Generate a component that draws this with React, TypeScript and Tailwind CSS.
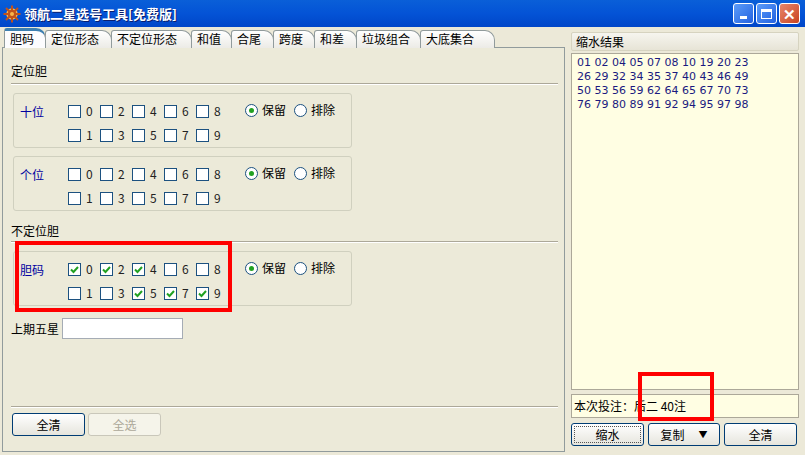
import React from "react";

const F = { fontFamily: '"Noto Sans CJK SC","Liberation Sans",sans-serif' };

function CB({ n, c }: { n: number; c?: boolean }) {
  return (
    <div className="flex items-center gap-[5px] w-[32px]">
      <div className="w-[13px] h-[13px] border border-[#1c5180] bg-white flex items-center justify-center">
        {c && (
          <svg width="9" height="9" viewBox="0 0 9 9"><path d="M1 4.5 L3.5 7 L8 2" stroke="#21a121" strokeWidth="2" fill="none" /></svg>
        )}
      </div>
      <span className="text-[12px] text-[#222]">{n}</span>
    </div>
  );
}

function Radio({ label, on }: { label: string; on?: boolean }) {
  return (
    <div className="flex items-center gap-[4px]">
      <div className="w-[13px] h-[13px] rounded-full border border-[#1c5180] bg-white flex items-center justify-center">
        {on && <div className="w-[5px] h-[5px] rounded-full bg-[#21a121]" />}
      </div>
      <span className="text-[12px]">{label}</span>
    </div>
  );
}

function Group({ name, checked = [] as number[] }: { name: string; checked?: number[] }) {
  return (
    <div className="ml-[10px] w-[339px] h-[55px] border border-[#d0d0bf] rounded-[3px] flex pt-[8px] pl-[6px]">
      <div className="w-[48px] text-[12px] text-[#0000a0] pt-[1px]">{name}</div>
      <div className="flex flex-col gap-[6px]">
        <div className="flex">{[0, 2, 4, 6, 8].map(n => <CB key={n} n={n} c={checked.includes(n)} />)}</div>
        <div className="flex">{[1, 3, 5, 7, 9].map(n => <CB key={n} n={n} c={checked.includes(n)} />)}</div>
      </div>
      <div className="flex gap-[8px] ml-[17px] h-[16px]">
        <Radio label="保留" on />
        <Radio label="排除" />
      </div>
    </div>
  );
}

function Btn({ t, dis, focus, w = "w-[73px]", children }: any) {
  return (
    <div className={`${w} h-[23px] rounded-[3px] border ${dis ? "border-[#c9c7ba] text-[#aca899] bg-[#f5f4ea]" : "border-[#003c74] bg-gradient-to-b from-white to-[#e6e5dd]"} flex items-center justify-center text-[12px] ${focus ? "outline-1 outline-dotted outline-[#555] -outline-offset-4" : ""}`}>
      {t}{children}
    </div>
  );
}

const tabs = [
  ["胆码", 42], ["定位形态", 67], ["不定位形态", 81], ["和值", 41], ["合尾", 43], ["跨度", 42], ["和差", 43], ["垃圾组合", 65], ["大底集合", 75],
] as const;

export default function App() {
  const nums = ["01 02 04 05 07 08 10 19 20 23", "26 29 32 34 35 37 40 43 46 49", "50 53 56 59 62 64 65 67 70 73", "76 79 80 89 91 92 94 95 97 98"];
  return (
    <div style={F} className="relative w-[805px] h-[455px] bg-[#ece9d8] overflow-hidden text-black">
      <div className="h-[27px] bg-gradient-to-b from-[#0a5fd8] via-[#0453d6] to-[#0046c8] flex items-center px-[3px]">
        <svg width="18" height="18" viewBox="0 0 18 18">
          <circle cx="9" cy="9" r="5" fill="#c0521c" stroke="#f7b64b" strokeWidth="1.5" />
          {[0, 45, 90, 135, 180, 225, 270, 315].map(a => (
            <line key={a} x1="9" y1="9" x2={9 + 8.5 * Math.cos((a * Math.PI) / 180)} y2={9 + 8.5 * Math.sin((a * Math.PI) / 180)} stroke="#c0521c" strokeWidth="2" />
          ))}
          <circle cx="9" cy="9" r="2" fill="#f7b64b" />
        </svg>
        <span className="ml-[3px] text-white font-bold text-[13px] [text-shadow:1px_1px_#0a1e6e]">领航二星选号工具[免费版]</span>
        <div className="ml-auto flex gap-[2px] pr-[2px]">
          <div className="w-[21px] h-[21px] rounded-[3px] border border-white bg-gradient-to-br from-[#5c9cf9] to-[#2461e0] flex items-end justify-center pb-[4px]"><div className="w-[7px] h-[3px] bg-white" /></div>
          <div className="w-[21px] h-[21px] rounded-[3px] border border-white bg-gradient-to-br from-[#5c9cf9] to-[#2461e0] flex items-center justify-center"><div className="w-[11px] h-[10px] border border-white border-t-[3px]" /></div>
          <div className="w-[21px] h-[21px] rounded-[3px] border border-white bg-gradient-to-br from-[#e8866a] to-[#c9421d] flex items-center justify-center text-white font-bold text-[15px] leading-none">✕</div>
        </div>
      </div>
      <div className="flex">
        <div className="w-[565px] pl-[2px]">
          <div className="flex items-end h-[21px] pl-[2px]">
            {tabs.map(([t, w], i) => (
              <div key={t} style={{ width: w }} className={`${i === 0 ? "h-[20px] bg-[#fcfcfe] border-t-[3px] border-t-[#3c7fb1] z-10" : "h-[18px] bg-gradient-to-b from-white to-[#ecebe6]"} border border-[#919b9c] border-b-0 rounded-tl-[3px] rounded-tr-[10px] -mr-[1px] text-[12px] px-[5px] leading-[16px] whitespace-nowrap`}>{t}</div>
            ))}
          </div>
          <div className="h-[405px] border border-[#919b9c] bg-[#ecead9] -mt-[1px] pt-[14px] pr-[6px]">
            <div className="ml-[8px] text-[12px]">定位胆</div>
            <div className="ml-[8px] mt-[3px] h-[2px] border-t border-[#aca899] border-b border-b-white" />
            <div className="mt-[8px] flex flex-col gap-[8px]">
              <Group name="十位" />
              <Group name="个位" />
            </div>
            <div className="ml-[8px] mt-[11px] text-[12px]">不定位胆</div>
            <div className="ml-[8px] mt-[1px] h-[2px] border-t border-[#aca899] border-b border-b-white" />
            <div className="mt-[8px]"><Group name="胆码" checked={[0, 2, 4, 5, 7, 9]} /></div>
            <div className="ml-[8px] mt-[12px] flex items-center gap-[3px] text-[12px]">
              <span>上期五星</span>
              <div className="w-[121px] h-[21px] bg-white border border-[#a5acb5]" />
            </div>
            <div className="ml-[8px] mt-[67px] h-[2px] border-t border-[#aca899] border-b border-b-white" />
            <div className="ml-[9px] mt-[5px] flex gap-[3px]">
              <Btn t="全清" />
              <Btn t="全选" dis />
            </div>
          </div>
        </div>
        <div className="w-[228px] ml-[6px] pt-[5px] flex flex-col">
          <div className="h-[19px] rounded-[2px] border border-[#d6d3c0] bg-gradient-to-b from-[#f6f5ef] to-[#e7e4d6] text-[12px] px-[4px] leading-[17px]">缩水结果</div>
          <div className="mt-[2px] h-[337px] border border-[#aca899] bg-[#fffee3] px-[5px] pt-[2px] text-[12px] leading-[14px] text-[#1a1a80]" style={{ fontFamily: '"DejaVu Sans",sans-serif', fontSize: 11 }}>
            {nums.map(l => <div key={l}>{l}</div>)}
          </div>
          <div className="mt-[4px] h-[24px] border border-[#aca899] bg-[#fffee3] text-[12px] px-[2px] leading-[22px]">本次投注：后二 40注</div>
          <div className="mt-[5px] flex gap-[4px]">
            <Btn t="缩水" focus />
            <Btn t="复制" w="w-[72px]"><span className="ml-[14px] text-[9px]">▼</span></Btn>
            <Btn t="全清" />
          </div>
        </div>
      </div>
      <div className="absolute left-[15px] top-[241px] w-[217px] h-[71px] border-[4px] border-[#ff0000]" />
      <div className="absolute left-[638px] top-[372px] w-[76px] h-[49px] border-[4px] border-[#ff0000]" />
    </div>
  );
}
